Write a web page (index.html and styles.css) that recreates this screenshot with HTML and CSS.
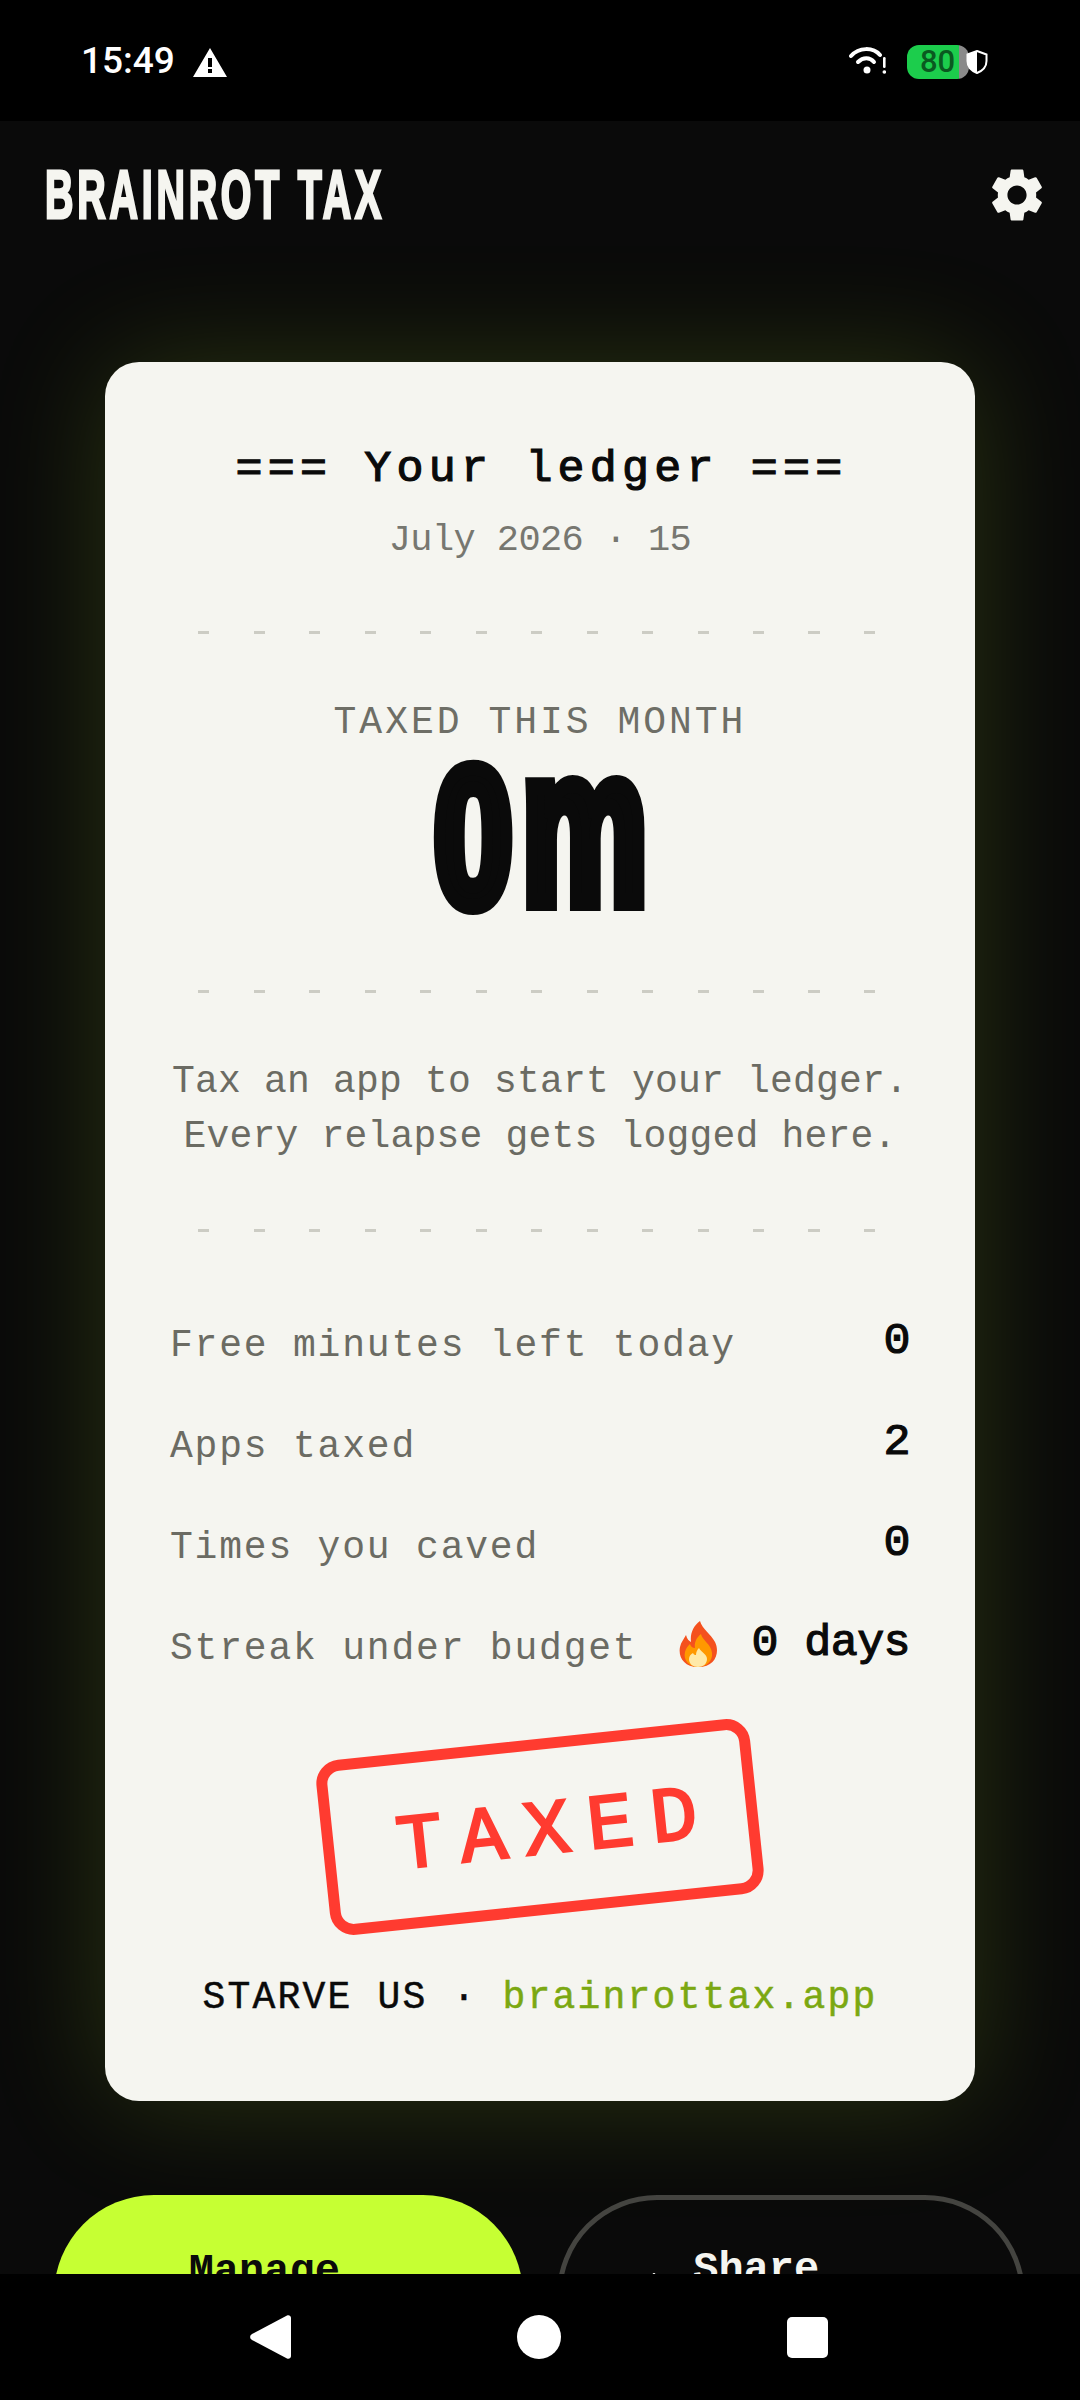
FILE: index.html
```html
<!DOCTYPE html>
<html lang="en">
<head>
    <meta charset="UTF-8">
    <meta name="viewport" content="width=device-width, initial-scale=1.0">
    <title>Brainrot Tax</title>
    <link rel="stylesheet" href="styles.css">
</head>
<body>
    <div class="status-bar">
        <div class="status-left">
            <span class="clock">15:49</span>
            <svg class="warn-icon" viewBox="0 0 34 29"><path fill="#fff" fill-rule="evenodd" d="M17 0 34 29H0ZM15 10v9h4v-9ZM15 21v4h4v-4Z"/></svg>
        </div>
        <div class="status-right">
            <svg class="wifi-icon" viewBox="0 0 37 28">
                <path d="M2 10C10 1 24 1 31 9" fill="none" stroke="#fff" stroke-width="4" stroke-linecap="round"/>
                <path d="M9 16C14 11 21 11 25 16" fill="none" stroke="#fff" stroke-width="4" stroke-linecap="round"/>
                <circle cx="18" cy="24" r="3.5" fill="#fff"/>
                <rect x="34" y="11" width="2.6" height="11" rx="1.2" fill="#fff"/>
                <circle cx="35.3" cy="26" r="1.8" fill="#fff"/>
            </svg>
            <div class="battery"><span class="battery-level">80</span></div>
            <svg class="shield-icon" viewBox="0 0 22 24">
                <path d="M11 1 20.5 4.500V11C20.500 17 16 21 11 23 6 21 1.500 17 1.500 11V4.500Z" fill="none" stroke="#fff" stroke-width="2"/>
                <path d="M11 1 1.500 4.500V11C1.500 17 6 21 11 23Z" fill="#fff"/>
            </svg>
        </div>
    </div>

    <main class="app">
        <header class="topbar">
            <h1 class="brand"><span class="brand-text">BRAINROT TAX</span></h1>
            <svg class="gear-icon" viewBox="0 0 24 24"><path fill="#f5f5f0" d="M19.14 12.94c.04-.3.06-.61.06-.94 0-.32-.02-.64-.07-.94l2.03-1.58c.18-.14.23-.41.12-.61l-1.92-3.32c-.12-.22-.37-.29-.59-.22l-2.39.96c-.5-.38-1.03-.7-1.62-.94l-.36-2.54c-.04-.24-.24-.41-.48-.41h-3.84c-.24 0-.43.17-.47.41l-.36 2.54c-.59.24-1.13.57-1.62.94l-2.39-.96c-.22-.08-.47 0-.59.22L2.74 8.87c-.12.21-.08.47.12.61l2.03 1.58c-.05.3-.09.63-.09.94s.02.64.07.94l-2.03 1.58c-.18.14-.23.41-.12.61l1.92 3.32c.12.22.37.29.59.22l2.39-.96c.5.38 1.03.7 1.62.94l.36 2.54c.05.24.24.41.48.41h3.84c.24 0 .44-.17.47-.41l.36-2.54c.59-.24 1.13-.56 1.62-.94l2.39.96c.22.08.47 0 .59-.22l1.92-3.32c.12-.22.07-.47-.12-.61l-2.01-1.58zM12 15.6c-1.98 0-3.6-1.62-3.6-3.6s1.62-3.6 3.6-3.6 3.6 1.62 3.6 3.6-1.62 3.6-3.6 3.6z"/></svg>
        </header>

        <section class="ledger">
            <h2 class="ledger-title">=== Your ledger ===</h2>
            <p class="ledger-date">July 2026 · 15</p>
            <div class="dashes dashes-1"></div>
            <p class="total-label">TAXED THIS MONTH</p>
            <p class="total"><span class="total-num">0</span><span class="total-unit">m</span></p>
            <div class="dashes dashes-2"></div>
            <p class="empty-note">Tax an app to start your ledger.<br>Every relapse gets logged here.</p>
            <div class="dashes dashes-3"></div>
            <div class="stats">
                <div class="stat"><span class="stat-label">Free minutes left today</span><span class="stat-value">0</span></div>
                <div class="stat"><span class="stat-label">Apps taxed</span><span class="stat-value">2</span></div>
                <div class="stat"><span class="stat-label">Times you caved</span><span class="stat-value">0</span></div>
                <div class="stat"><span class="stat-label">Streak under budget</span>
                    <span class="stat-value streak">
                        <svg class="flame" viewBox="0 0 41 46">
                            <path fill="#f4511e" d="M22 0C24 8 33 13 37 21 42 31 38 46 20 46 6 46 0 36 2 26 3 21 6 18 8 14 9 18 11 20 13 21 12 13 15 5 22 0Z"/>
                            <path fill="#ff9800" d="M23 13C24 19 33 23 34 32 35 40 28 46 20 46 11 46 5 39 7 31 8 27 10 25 12 23 13 26 15 27 17 27 16 22 18 17 23 13Z"/>
                            <path fill="#ffe9a8" d="M21 27C23 31 29 33 29 38 29 43 25 46 20 46 15 46 11 43 11 38 11 35 13 33 15 32 16 34 17 34 18 34 18 31 19 29 21 27Z"/>
                        </svg>
                        <span class="streak-text">0 days</span>
                    </span>
                </div>
            </div>
            <div class="stamp-wrap"><div class="stamp">TAXED</div></div>
            <p class="ledger-foot">STARVE US · <span class="foot-link">brainrottax.app</span></p>
        </section>

        <div class="actions">
            <button class="btn btn-primary">Manage<br>apps</button>
            <button class="btn btn-ghost">
                <svg class="share-icon" viewBox="0 0 34 40"><path d="M17 38V3M5 15 17 3 29 15" fill="none" stroke="#f5f5f0" stroke-width="5"/></svg>
                <span>Share<br>ledger</span>
            </button>
        </div>
    </main>

    <nav class="nav-bar">
        <svg class="nav-back" viewBox="0 0 41 44"><path fill="#fff" d="M37 .5C39 -.5 41 1 41 3V41C41 43 39 44.500 37 43.500L2 25C-.5 23.500 -.5 20.500 2 19Z"/></svg>
        <div class="nav-home"></div>
        <div class="nav-recent"></div>
    </nav>
</body>
</html>
```

FILE: styles.css
```css
* {
    margin: 0;
    padding: 0;
    box-sizing: border-box;
}

body {
    width: 1080px;
    height: 2400px;
    background: #0a0a0a;
    display: flex;
    flex-direction: column;
    overflow: hidden;
    font-family: "Liberation Mono", monospace;
}

/* barra de estado */
.status-bar {
    height: 121px;
    background: #000;
    display: flex;
    justify-content: space-between;
    padding: 45px 92px 0 81px;
    flex-shrink: 0;
}

.status-left {
    display: flex;
    align-items: flex-start;
    gap: 18px;
}

.clock {
    font-family: Roboto, sans-serif;
    font-weight: 500;
    font-size: 37px;
    line-height: 32px;
    color: #fff;
}

.warn-icon {
    width: 34px;
    height: 29px;
    margin-top: 3px;
}

.status-right {
    display: flex;
    align-items: flex-start;
}

.wifi-icon {
    width: 37px;
    height: 28px;
    margin-top: 1px;
    margin-right: 21px;
}

.battery {
    width: 62px;
    height: 34px;
    border-radius: 12px;
    background: linear-gradient(90deg, #1ccd4c 0 52px, #8a8a8a 52px);
    color: #0a5a20;
    font-family: Roboto, sans-serif;
    font-weight: 500;
    font-size: 31px;
    line-height: 34px;
    padding-left: 13px;
}

.shield-icon {
    width: 22px;
    height: 24px;
    margin: 5px 0 0 -3px;
}

/* contenido */
.app {
    flex: 1;
    min-height: 0;
    overflow: hidden;
}

.topbar {
    height: 148px;
    display: flex;
    justify-content: space-between;
    align-items: center;
    padding: 0 31px 0 45px;
}

.brand {
    width: 340px;
    font-family: "Liberation Sans", sans-serif;
    font-weight: 700;
    font-size: 69px;
    line-height: 70px;
    color: #f5f5f0;
    white-space: nowrap;
}

.brand-text {
    display: inline-block;
    letter-spacing: 6.700px;
    -webkit-text-stroke: 3px #f5f5f0;
    transform: scaleX(0.57);
    transform-origin: left center;
}

.gear-icon {
    width: 64px;
    height: 64px;
}

.ledger {
    margin: 93px 105px 0;
    height: 1739px;
    padding-top: 78px;
    background: #f5f5f0;
    border-radius: 34px;
    box-shadow: 0 0 120px rgba(198, 255, 51, 0.17);
    text-align: center;
    color: #0a0a0a;
}

.ledger-title {
    font-size: 45px;
    line-height: 60px;
    font-weight: 400;
    padding-left: 3px;
    letter-spacing: 5.200px;
    -webkit-text-stroke: 1.2px #0a0a0a;
}

.ledger-date {
    margin-top: 16px;
    font-size: 37px;
    line-height: 48px;
    letter-spacing: -0.6px;
    color: #777770;
}

.dashes {
    height: 3px;
    margin: 0 93px;
    background: repeating-linear-gradient(90deg, #ccccc4 0 11px, transparent 11px 55.5px);
}

.dashes-1 {
    margin-top: 67px;
}

.total-label {
    margin-top: 65px;
    font-size: 38px;
    line-height: 48px;
    letter-spacing: 3px;
    color: #6e6e66;
}

.total {
    height: 181px;
    display: flex;
    justify-content: center;
    align-items: flex-end;
    gap: 6px;
    font-family: "Liberation Sans", sans-serif;
    font-weight: 700;
    font-size: 196px;
    line-height: 181px;
}

.total-num,
.total-unit {
    display: block;
    -webkit-text-stroke: 16px #0a0a0a;
    transform-origin: left bottom;
}

.total-num {
    width: 82px;
    transform: scaleX(0.72);
}

.total-unit {
    width: 125px;
    transform: scale(0.72, 1.12);
}

.dashes-2 {
    margin-top: 62px;
}

.empty-note {
    margin-top: 61px;
    font-size: 38px;
    line-height: 55px;
    letter-spacing: 0.2px;
    color: #6b6b63;
}

.dashes-3 {
    margin-top: 65px;
}

.stats {
    margin-top: 83px;
    padding: 0 65px;
    display: flex;
    flex-direction: column;
    gap: 42px;
}

.stat {
    height: 59px;
    display: flex;
    justify-content: space-between;
    align-items: baseline;
}

.stat-label {
    font-size: 38px;
    line-height: 59px;
    letter-spacing: 1.8px;
    color: #6b6b63;
}

.stat-value {
    font-size: 45px;
    line-height: 59px;
    letter-spacing: -0.6px;
    -webkit-text-stroke: 1.2px #0a0a0a;
    color: #0a0a0a;
    position: relative;
    top: -3px;
}

.streak {
    display: flex;
    align-items: baseline;
    gap: 33px;
    top: -4px;
}

.flame {
    width: 41px;
    height: 46px;
    align-self: center;
}

.stamp-wrap {
    margin-top: 62px;
    display: flex;
    justify-content: center;
}

.stamp {
    width: 436px;
    height: 176px;
    padding-left: 30px;
    border: 11px solid #ff3b30;
    border-radius: 24px;
    transform: rotate(-6deg);
    color: #ff3b30;
    font-size: 78px;
    line-height: 166px;
    letter-spacing: 17px;
    -webkit-text-stroke: 2.500px #ff3b30;
}

.ledger-foot {
    margin-top: 59px;
    font-size: 38px;
    line-height: 48px;
    letter-spacing: 2.2px;
    color: #0a0a0a;
    -webkit-text-stroke: 0.5px;
}

.foot-link {
    color: #7ba812;
}

.actions {
    margin-top: 94px;
    padding: 0 55px 0 54px;
    display: grid;
    grid-template-columns: 1fr 1fr;
    gap: 34px;
}

.btn {
    min-width: 0;
    height: 200px;
    border-radius: 100px;
    font-family: "Liberation Mono", monospace;
    font-size: 42px;
    line-height: 50px;
    font-weight: 700;
    display: flex;
    justify-content: center;
    padding: 52px 0 0;
    border: none;
}

.btn-primary {
    background: #c6ff33;
    color: #0a0a0a;
    padding-right: 48px;
}

.btn-ghost {
    background: transparent;
    border: 5px solid #444440;
    color: #f5f5f0;
    padding: 45px 113px 0 0;
    gap: 10px;
}

.share-icon {
    width: 34px;
    height: 40px;
    margin-top: 28px;
}

/* barra de navegacion */
.nav-bar {
    height: 126px;
    background: #000;
    flex-shrink: 0;
    display: flex;
    align-items: center;
    justify-content: space-between;
    padding: 0 252px 0 250px;
}

.nav-back {
    width: 41px;
    height: 44px;
}

.nav-home {
    width: 44px;
    height: 44px;
    border-radius: 50%;
    background: #fff;
}

.nav-recent {
    width: 41px;
    height: 41px;
    border-radius: 5px;
    background: #fff;
}
```
